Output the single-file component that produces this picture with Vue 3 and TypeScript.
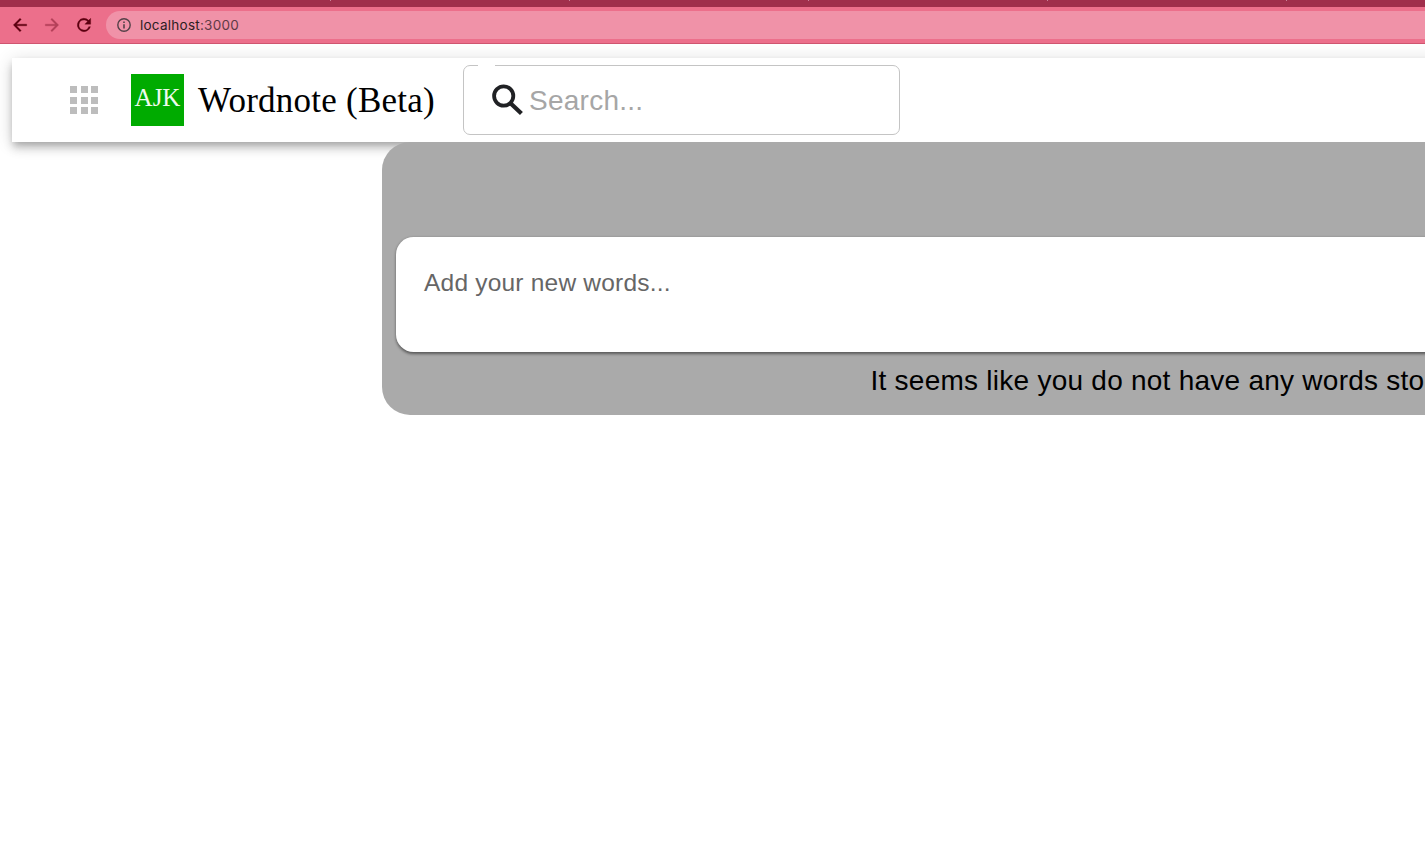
<script setup lang="ts">
const tabSeparators: number[] = [0, 1, 2, 3, 4]
const dots: number[] = [0, 1, 2, 3, 4, 5, 6, 7, 8]
</script>

<template>
  <div class="window">
    <div class="tab-strip">
      <i v-for="t in tabSeparators" :key="t" class="separator"></i>
    </div>
    <div class="toolbar">
      <svg class="nav" viewBox="0 0 24 24"><path d="M20 11H7.83l5.59-5.59L12 4l-8 8 8 8 1.41-1.41L7.83 13H20z" /></svg>
      <svg class="nav faded" viewBox="0 0 24 24"><path d="M12 4l-1.41 1.41L16.17 11H4v2h12.17l-5.58 5.59L12 20l8-8z" /></svg>
      <svg class="nav" viewBox="0 0 24 24"><path d="M17.65 6.35A8 8 0 1 0 19.73 14h-2.08A6 6 0 1 1 12 6c1.66 0 3.14.69 4.22 1.78L13 11h7V4z" /></svg>
      <div class="address">
        <svg class="info" viewBox="0 0 14 14">
          <circle cx="7" cy="7" r="6.2" fill="none" stroke="#544148" stroke-width="1.4" />
          <path d="M6.2 6.2h1.6v4.3H6.2zM6.2 3.5h1.6v1.6H6.2z" fill="#544148" />
        </svg>
        <span class="url">localhost<span class="port">:3000</span></span>
      </div>
    </div>

    <div class="page">
      <header class="header">
        <div class="apps"><i v-for="d in dots" :key="d"></i></div>
        <div class="logo">AJK</div>
        <h1 class="title">Wordnote (Beta)</h1>
        <div class="search">
          <i class="notch"></i>
          <svg class="lens" viewBox="0 0 32 32">
            <circle cx="11.7" cy="12" r="9.6" fill="none" stroke="#202124" stroke-width="3.8" />
            <path d="M18.8 19.4L29.4 29.6" stroke="#202124" stroke-width="4.2" />
          </svg>
          <span class="hint">Search...</span>
        </div>
      </header>
      <main class="panel">
        <div class="entry">Add your new words...</div>
        <p class="empty">It seems like you do not have any words sto</p>
      </main>
    </div>
  </div>
</template>

<style>
body {
  margin: 0;
  overflow: hidden;
}
</style>

<style scoped>
.window {
  width: 1425px;
  height: 856px;
  overflow: hidden;
  background: #fff;
  font-family: "Liberation Sans", Arial, sans-serif;
}
.tab-strip {
  height: 7px;
  background: #a02e4b;
  display: flex;
  gap: 238px;
  padding-left: 330px;
}
.separator {
  flex: none;
  width: 1px;
  height: 1px;
  background: #c98297;
}
.toolbar {
  box-sizing: border-box;
  height: 37px;
  background: #ec6f8b;
  border-bottom: 1px solid #cf5570;
  display: flex;
  align-items: center;
  padding-left: 10px;
}
.nav {
  width: 20px;
  height: 20px;
  margin-right: 12px;
  fill: #5c0010;
  stroke: #5c0010;
  stroke-width: 0.4;
  flex: none;
}
.faded {
  fill: #b34059;
  stroke: #b34059;
}
.address {
  flex: 1;
  height: 28px;
  border-radius: 14px 0 0 14px;
  background: #f092a8;
  display: flex;
  align-items: center;
  padding-left: 11px;
}
.info {
  width: 14px;
  height: 14px;
  margin-right: 9px;
}
.url {
  font: 13.5px/20px Inter, Roboto, sans-serif;
  letter-spacing: 0.25px;
  color: #2e1d22;
}
.port {
  color: #5f3a45;
}
.page {
  padding: 14px 0 0 12px;
}
.header {
  box-sizing: border-box;
  height: 84px;
  margin-right: -40px;
  background: #fff;
  display: flex;
  align-items: center;
  padding-left: 58px;
  box-shadow: 0 3.5px 7px -1.75px rgba(0, 0, 0, 0.2), 0 7px 8.75px rgba(0, 0, 0, 0.14), 0 1.75px 17.5px rgba(0, 0, 0, 0.14);
}
.apps {
  width: 28px;
  height: 28px;
  display: grid;
  grid-template-columns: repeat(3, 7px);
  grid-template-rows: repeat(3, 7px);
  justify-content: space-between;
  align-content: space-between;
}
.apps i {
  background: #bdbdbd;
}
.logo {
  width: 53px;
  height: 52px;
  margin-left: 33px;
  background: #00ab00;
  color: #eefbee;
  font: 25px/48px "Liberation Serif", serif;
  text-align: center;
}
.title {
  width: 237px;
  margin: 2px 0 0 14px;
  font: 35px/40px "Liberation Serif", serif;
  letter-spacing: 0.24px;
  color: #000;
  white-space: nowrap;
}
.search {
  position: relative;
  box-sizing: border-box;
  width: 437px;
  height: 70px;
  margin-left: 28px;
  border: 1px solid #c4c4c4;
  border-radius: 7px;
  display: flex;
  align-items: center;
  padding-left: 28px;
}
.notch {
  position: absolute;
  left: 14px;
  top: -1px;
  width: 17px;
  height: 1px;
  background: #fff;
}
.lens {
  width: 32px;
  height: 32px;
}
.hint {
  margin: 2px 0 0 5px;
  font-size: 28px;
  line-height: 32px;
  color: #a6a6a6;
  letter-spacing: 0.26px;
}
.panel {
  position: relative;
  box-sizing: border-box;
  height: 273px;
  margin-left: 370px;
  padding: 95px 0 0 14px;
  background: #aaa;
  border-radius: 28px 0 0 28px;
}
.entry {
  box-sizing: border-box;
  height: 115px;
  margin-right: -20px;
  padding: 31px 0 0 28px;
  background: #fff;
  border-radius: 17.5px 0 0 17.5px;
  box-shadow: 0 1.75px 3px rgba(0, 0, 0, 0.48);
  font-size: 24.5px;
  line-height: 30px;
  color: #666;
  letter-spacing: 0.21px;
}
.empty {
  margin: 13px 0 0 474.5px;
  font-size: 28px;
  line-height: 32px;
  color: #000;
  letter-spacing: 0.25px;
  white-space: nowrap;
}
</style>
